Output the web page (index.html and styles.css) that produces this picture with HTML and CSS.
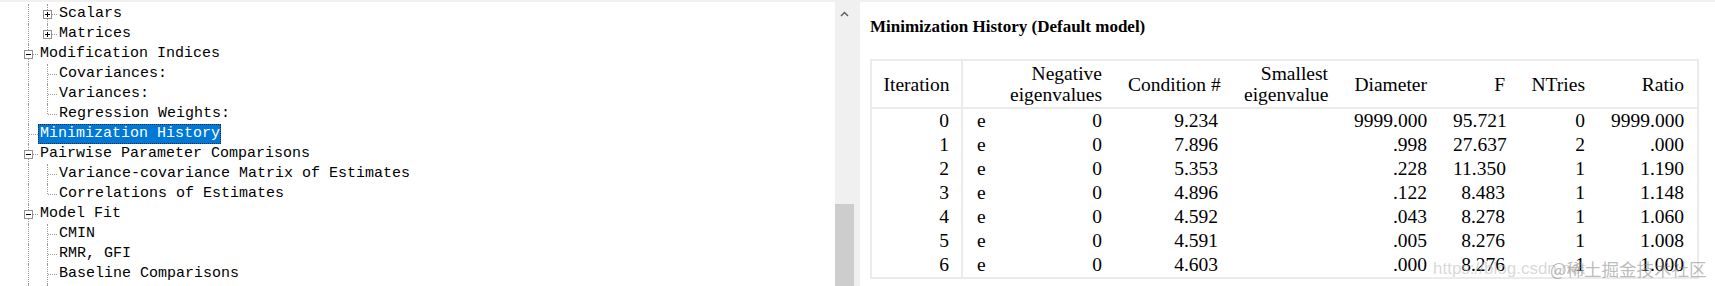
FILE: index.html
```html
<!DOCTYPE html>
<html lang="en">
<head>
    <meta charset="UTF-8">
    <title>Amos Output - Minimization History</title>
    <link rel="stylesheet" href="styles.css">
</head>
<body>
    <div class="app">
        <div class="tree">
            <div class="row"><span class="g line"></span><span class="g tee"><svg class="box" width="9" height="9"><rect x="0.5" y="0.5" width="8" height="8" fill="#fff" stroke="#919191"/><path d="M2 4.5h5M4.5 2v5" stroke="#000"/></svg></span><span class="label">Scalars</span></div>
            <div class="row"><span class="g line"></span><span class="g elbow"><svg class="box" width="9" height="9"><rect x="0.5" y="0.5" width="8" height="8" fill="#fff" stroke="#919191"/><path d="M2 4.5h5M4.5 2v5" stroke="#000"/></svg></span><span class="label">Matrices</span></div>
            <div class="row"><span class="g tee"><svg class="box" width="9" height="9"><rect x="0.5" y="0.5" width="8" height="8" fill="#fff" stroke="#919191"/><path d="M2 4.5h5" stroke="#000"/></svg></span><span class="label">Modification Indices</span></div>
            <div class="row"><span class="g line"></span><span class="g tee"></span><span class="label">Covariances:</span></div>
            <div class="row"><span class="g line"></span><span class="g tee"></span><span class="label">Variances:</span></div>
            <div class="row"><span class="g line"></span><span class="g elbow"></span><span class="label">Regression Weights:</span></div>
            <div class="row"><span class="g tee"></span><span class="label selected">Minimization History</span></div>
            <div class="row"><span class="g tee"><svg class="box" width="9" height="9"><rect x="0.5" y="0.5" width="8" height="8" fill="#fff" stroke="#919191"/><path d="M2 4.5h5" stroke="#000"/></svg></span><span class="label">Pairwise Parameter Comparisons</span></div>
            <div class="row"><span class="g line"></span><span class="g tee"></span><span class="label">Variance-covariance Matrix of Estimates</span></div>
            <div class="row"><span class="g line"></span><span class="g elbow"></span><span class="label">Correlations of Estimates</span></div>
            <div class="row"><span class="g tee"><svg class="box" width="9" height="9"><rect x="0.5" y="0.5" width="8" height="8" fill="#fff" stroke="#919191"/><path d="M2 4.5h5" stroke="#000"/></svg></span><span class="label">Model Fit</span></div>
            <div class="row"><span class="g line"></span><span class="g tee"></span><span class="label">CMIN</span></div>
            <div class="row"><span class="g line"></span><span class="g tee"></span><span class="label">RMR, GFI</span></div>
            <div class="row"><span class="g line"></span><span class="g tee"></span><span class="label">Baseline Comparisons</span></div>
            <div class="row"><span class="g line"></span><span class="g line"></span></div>
        </div>

        <div class="vscroll">
            <svg class="arrow" width="9" height="6"><path d="M1 5l3.5-3.5L8 5" fill="none" stroke="#606060" stroke-width="1.5"/></svg>
            <div class="thumb"></div>
        </div>

        <div class="report">
            <h1 class="title">Minimization History (Default model)</h1>
            <table class="grid">
                <colgroup>
                    <col style="width:91px">
                    <col style="width:34px">
                    <col style="width:118px">
                    <col style="width:116px">
                    <col style="width:110px">
                    <col style="width:99px">
                    <col style="width:78px">
                    <col style="width:80px">
                    <col style="width:99px">
                </colgroup>
                <thead>
                    <tr>
                        <th class="first">Iteration</th>
                        <th></th>
                        <th>Negative<br>eigenvalues</th>
                        <th>Condition #</th>
                        <th>Smallest<br>eigenvalue</th>
                        <th>Diameter</th>
                        <th>F</th>
                        <th>NTries</th>
                        <th>Ratio</th>
                    </tr>
                </thead>
                <tbody>
                    <tr><td class="first">0</td><td class="flag">e</td><td>0</td><td>9.234</td><td></td><td>9999.000</td><td>95.721</td><td>0</td><td>9999.000</td></tr>
                    <tr><td class="first">1</td><td class="flag">e</td><td>0</td><td>7.896</td><td></td><td>.998</td><td>27.637</td><td>2</td><td>.000</td></tr>
                    <tr><td class="first">2</td><td class="flag">e</td><td>0</td><td>5.353</td><td></td><td>.228</td><td>11.350</td><td>1</td><td>1.190</td></tr>
                    <tr><td class="first">3</td><td class="flag">e</td><td>0</td><td>4.896</td><td></td><td>.122</td><td>8.483</td><td>1</td><td>1.148</td></tr>
                    <tr><td class="first">4</td><td class="flag">e</td><td>0</td><td>4.592</td><td></td><td>.043</td><td>8.278</td><td>1</td><td>1.060</td></tr>
                    <tr><td class="first">5</td><td class="flag">e</td><td>0</td><td>4.591</td><td></td><td>.005</td><td>8.276</td><td>1</td><td>1.008</td></tr>
                    <tr><td class="first">6</td><td class="flag">e</td><td>0</td><td>4.603</td><td></td><td>.000</td><td>8.276</td><td>1</td><td>1.000</td></tr>
                </tbody>
            </table>
            <div class="watermark">
                <span class="wm-url">https://blog.csdn.net</span>
                <span class="wm-site">@稀土掘金技术社区</span>
            </div>
        </div>
    </div>
</body>
</html>
```

FILE: styles.css
```css
body {
    margin: 0;
    background: #fff;
    overflow: hidden;
}
.app {
    display: flex;
    height: 284px;
    border-top: 2px solid #f0f0f0;
    overflow: hidden;
}

/* tree pane */
.tree {
    width: 816px;
    padding: 2px 0 0 19px;
    font-family: "Liberation Mono", monospace;
    font-size: 15px;
    color: #000;
    overflow: hidden;
}
.row {
    display: flex;
    height: 20px;
    line-height: 20px;
    white-space: nowrap;
}
.g {
    position: relative;
    flex: none;
    width: 19px;
    height: 20px;
}
.line::before,
.tee::before,
.elbow::before {
    content: "";
    position: absolute;
    left: 9px;
    top: 0;
    height: 20px;
    border-left: 1px dotted #9a9a9a;
}
.elbow::before {
    height: 10px;
}
.tee::after,
.elbow::after {
    content: "";
    position: absolute;
    left: 10px;
    top: 10px;
    width: 9px;
    border-top: 1px dotted #9a9a9a;
}
.box {
    position: absolute;
    left: 5px;
    top: 6px;
    z-index: 1;
}
.label {
    padding: 0 1px 0 2px;
    height: 20px;
}
.selected {
    background: #0078d7;
    color: #fff;
    outline: 1px dotted #2a2a2a;
    outline-offset: -1px;
}

/* scrollbar */
.vscroll {
    flex: none;
    width: 25px;
    background: #f0f0f0;
    display: flex;
    flex-direction: column;
}
.arrow {
    margin: 9px 0 0 5px;
}
.thumb {
    margin-top: auto;
    width: 19px;
    height: 82px;
    background: #cdcdcd;
}

/* report pane */
.report {
    position: relative;
    flex: 1;
    padding: 15px 0 0 10px;
    font-family: "Liberation Serif", "Times New Roman", serif;
    color: #000;
}
.title {
    margin: 0 0 22px;
    font-size: 17px;
    line-height: 20px;
    font-weight: bold;
}
.grid {
    table-layout: fixed;
    width: 829px;
    border-collapse: separate;
    border-spacing: 0;
    border: 2px solid #ebebeb;
    font-size: 19.5px;
}
.grid th {
    font-weight: normal;
    text-align: right;
    line-height: 21px;
    height: 42px;
    padding: 2px 13px;
    border-bottom: 2px solid #ebebeb;
    white-space: nowrap;
    vertical-align: middle;
}
.grid td {
    text-align: right;
    height: 24px;
    line-height: 24px;
    padding: 0 13px;
    white-space: nowrap;
}
.grid .first {
    border-right: 2px solid #ebebeb;
    padding: 0 12px;
}
.grid th.first {
    text-align: center;
    padding: 2px 10px;
}
.grid td.flag {
    text-align: left;
    padding: 0 0 0 14px;
}

.watermark {
    position: absolute;
    left: 573px;
    top: 255px;
    white-space: nowrap;
    line-height: 24px;
}
.wm-url {
    font-family: "Liberation Sans", Arial, sans-serif;
    font-size: 17px;
    color: rgba(190, 190, 190, 0.6);
}
.wm-site {
    position: absolute;
    left: 117px;
    top: 0;
    font-family: "Noto Sans CJK SC", sans-serif;
    font-size: 17.5px;
    color: rgba(130, 130, 130, 0.55);
}
```
